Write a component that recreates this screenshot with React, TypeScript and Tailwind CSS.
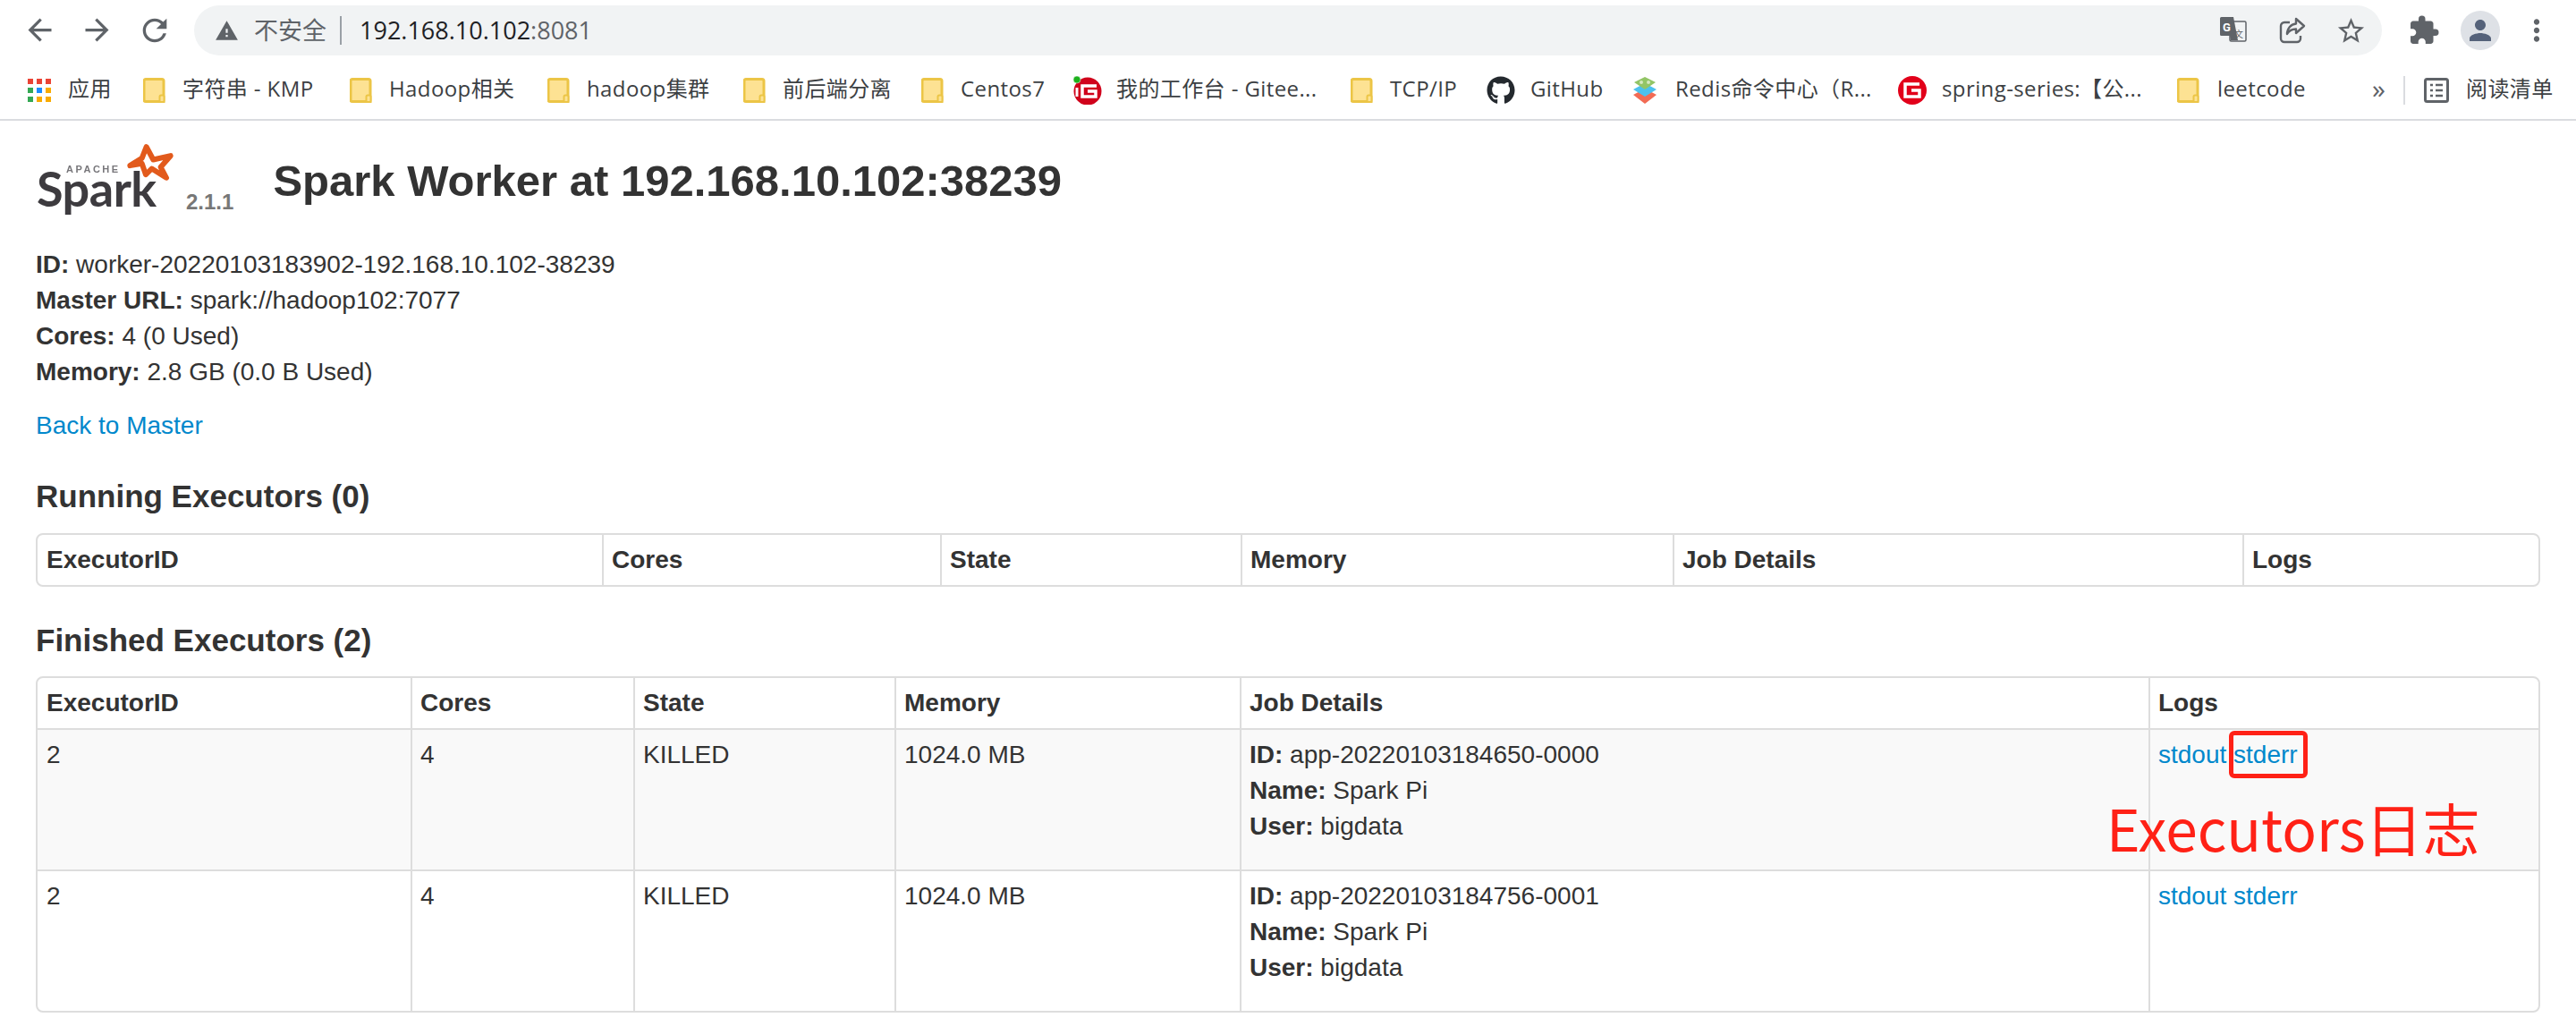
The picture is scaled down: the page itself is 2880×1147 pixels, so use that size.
import React from 'react';
import { FaGithub } from 'react-icons/fa';
import {
  MdArrowBack,
  MdArrowForward,
  MdExtension,
  MdMoreVert,
  MdPerson,
  MdRefresh,
  MdStarBorder,
  MdWarning,
} from 'react-icons/md';

const chromeFont = "font-['Open_Sans','Noto_Sans_CJK_SC',sans-serif]";

const Folder = () => (
  <svg width="25" height="28" viewBox="0 0 25 28" className="shrink-0">
    <path d="M3 1.5h18a2 2 0 0 1 2 2v23H3a2 2 0 0 1-2-2v-21a2 2 0 0 1 2-2z" fill="#fde293" stroke="#ecc546" strokeWidth="3" />
    <rect x="18.5" y="19.5" width="5" height="7.5" rx="1.5" fill="#fde293" stroke="#ecc546" strokeWidth="2" />
  </svg>
);

const AppsGrid = () => {
  const colors = ['bg-[#ea4335]', 'bg-[#ea4335]', 'bg-[#ea4335]', 'bg-[#34a853]', 'bg-[#1a8cff]', 'bg-[#f9ab00]', 'bg-[#34a853]', 'bg-[#f9ab00]', 'bg-[#f9ab00]'];
  return (
    <div className="grid shrink-0 grid-cols-3 gap-1">
      {colors.map((c, i) => (
        <div key={i} className={`h-[6px] w-[6px] ${c}`} />
      ))}
    </div>
  );
};

const GiteeIcon = () => (
  <svg width="32" height="32" viewBox="0 0 32 32" className="shrink-0">
    <circle cx="16" cy="17" r="15.5" fill="#d0021b" />
    <circle cx="4" cy="4" r="4" fill="#1db11d" stroke="#fff" strokeWidth="0.5" />
    <path d="M4 13v10" stroke="#fff" strokeWidth="3" fill="none" />
    <path d="M26 11H10v12h15v-6h-9" stroke="#fff" strokeWidth="3.5" fill="none" />
  </svg>
);

const SeriesIcon = () => (
  <svg width="32" height="32" viewBox="0 0 32 32" className="shrink-0">
    <circle cx="16" cy="16" r="16" fill="#e2001a" />
    <path d="M24 9H8v14h16v-7H15" stroke="#fff" strokeWidth="3.5" fill="none" />
  </svg>
);

const RedisIcon = () => (
  <svg width="28" height="32" viewBox="0 0 28 32" className="shrink-0 blur-[0.4px]">
    <path d="M1 21l13-7 13 7-13 10z" fill="#f26b54" />
    <path d="M1 15l13-7 13 7-13 8z" fill="#4cc1ee" />
    <path d="M2 7l12-6 12 6-12 8z" fill="#93c566" />
    <circle cx="10" cy="7" r="2" fill="#d5e8c0" />
    <circle cx="18" cy="7" r="2" fill="#d5e8c0" />
  </svg>
);

const TranslateIcon = () => (
  <svg width="30" height="30" viewBox="0 0 30 30" className="shrink-0">
    <rect x="11" y="5" width="18" height="22" rx="1.5" fill="#f1f3f4" stroke="#5f6368" strokeWidth="1.5" />
    <path d="M1.5 0H15l5 26h-8l-1-5H1.5A1.5 1.5 0 0 1 0 19.500V1.500A1.500 1.500 0 0 1 1.500 0z" fill="#5f6368" />
    <text x="3" y="16" fontSize="13" fontWeight="700" fill="#fff" fontFamily="Roboto, sans-serif">G</text>
    <text x="16" y="23" fontSize="10" fill="#5f6368" fontFamily="Noto Sans CJK SC, sans-serif">文</text>
  </svg>
);

const ShareIcon = () => (
  <svg width="30" height="30" viewBox="0 0 30 30" fill="none" stroke="#5f6368" strokeWidth="2.4" strokeLinejoin="round" className="shrink-0">
    <path d="M12 6H6a4 4 0 0 0-4 4v14a4 4 0 0 0 4 4h14a4 4 0 0 0 4-4v-3" />
    <path d="M19 2l9 8-9 8v-4.500c-5 0-8 2-10 5.500 0-6 4-11 10-11.500z" />
  </svg>
);

const ReadingListIcon = () => (
  <svg width="28" height="28" viewBox="0 0 28 28" fill="none" className="shrink-0">
    <rect x="1.500" y="1.500" width="25" height="25" rx="2" stroke="#5f6368" strokeWidth="3" />
    <path d="M7 8h3M13 8h8M7 14h3M13 14h8M7 20h3M13 20h8" stroke="#5f6368" strokeWidth="2.500" />
  </svg>
);

const SparkLogo = () => (
  <div className="relative h-[80px] w-[167px] shrink-0 blur-[0.6px]">
    <svg width="60" height="47" viewBox="350 30 180 140" className="absolute left-[98px] top-0">
      <path
        d="M427 42l23 43 58-13-33 38 19 36-49-31-20 20-13-37-40 7 40-25z"
        fill="none"
        stroke="#e25a1c"
        strokeWidth="18"
        strokeLinejoin="round"
      />
    </svg>
    <span className="absolute left-[34px] top-[24px] font-['Liberation_Sans',sans-serif] text-[11px] font-bold leading-[10px] tracking-[2.500px] text-[#77767a]">
      APACHE
    </span>
    <span className="absolute left-[1px] top-[36px] font-['Lato',sans-serif] text-[54px] font-bold leading-[30px] tracking-[-0.5px] text-[#3d3b3f]">
      Spark
    </span>
  </div>
);

const Bookmark = ({ icon, label, className }: { icon: React.ReactNode; label?: string; className: string }) => (
  <div className={`flex shrink-0 items-center gap-[19px] whitespace-nowrap ${className}`}>
    {icon}
    {label && <span className="-mt-[3px]">{label}</span>}
  </div>
);

const Toolbar = () => (
  <div className={`${chromeFont} h-[135px] border-b-2 border-[#dadce0] bg-white text-[#3c4043]`}>
    <div className="flex h-[68px] items-center pl-[25px] pr-[22px]">
      <MdArrowBack size={39} color="#5f6368" className="-mt-[1px] shrink-0" />
      <MdArrowForward size={39} color="#5f6368" className="-mt-[1px] ml-[25px] shrink-0" />
      <MdRefresh size={40} color="#5f6368" className="-mt-[1px] ml-[25px] shrink-0" />
      <div className="ml-[24px] mt-[6px] flex h-[56px] w-[2446px] shrink-0 items-center justify-between self-start rounded-full bg-[#f1f3f4] pl-[23px] pr-[20px]">
        <div className="flex items-center">
          <MdWarning size={27} color="#5f6368" />
          <span className="ml-[17px] text-[27px] text-[#5f6368]">不安全</span>
          <div className="ml-[15px] h-[32px] w-[2px] bg-[#9aa0a6]" />
          <span className="ml-[20px] text-[27px] text-[#202124]">
            192.168.10.102<span className="text-[#5f6368]">:8081</span>
          </span>
        </div>
        <div className="flex items-center gap-[36px]">
          <TranslateIcon />
          <ShareIcon />
          <MdStarBorder size={35} color="#5f6368" className="-mx-[3px]" />
        </div>
      </div>
      <MdExtension size={36} color="#5f6368" className="ml-[29px] shrink-0" />
      <div className="ml-[23px] flex h-[44px] w-[44px] shrink-0 items-center justify-center rounded-full bg-[#dee1e6]">
        <MdPerson size={36} color="#55627a" />
      </div>
      <MdMoreVert size={38} color="#5f6368" className="ml-[22px] shrink-0" />
    </div>
    <div className="flex h-[65px] items-center pl-[31px] text-[24px] tracking-[0.4px]">
      <Bookmark icon={<AppsGrid />} label="应用" className="w-[129px]" />
      <Bookmark icon={<Folder />} label="字符串 - KMP" className="w-[231px]" />
      <Bookmark icon={<Folder />} label="Hadoop相关" className="w-[221px]" />
      <Bookmark icon={<Folder />} label="hadoop集群" className="w-[219px]" />
      <Bookmark icon={<Folder />} label="前后端分离" className="w-[199px]" />
      <Bookmark icon={<Folder />} label="Centos7" className="w-[170px]" />
      <Bookmark icon={<GiteeIcon />} label="我的工作台 - Gitee..." className="w-[310px] !gap-[16px]" />
      <Bookmark icon={<Folder />} label="TCP/IP" className="w-[152px]" />
      <Bookmark icon={<FaGithub size={32} color="#24292e" />} label="GitHub" className="w-[163px] !gap-[17px]" />
      <Bookmark icon={<RedisIcon />} label="Redis命令中心（R..." className="w-[297px] !gap-[20px]" />
      <Bookmark icon={<SeriesIcon />} label="spring-series:【公..." className="w-[312px] !gap-[17px]" />
      <Bookmark icon={<Folder />} label="leetcode" className="w-[218px] !gap-[20px]" />
      <span className="-mt-[4px] w-[35px] shrink-0 text-[30px] leading-none text-[#5f6368]">»</span>
      <div className="h-[32px] w-[2px] shrink-0 bg-[#dadce0]" />
      <Bookmark icon={<ReadingListIcon />} label="阅读清单" className="ml-[21px] !gap-[19px]" />
    </div>
  </div>
);

const headers = ['ExecutorID', 'Cores', 'State', 'Memory', 'Job Details', 'Logs'];

const Cell = ({ first, top, children, className = '' }: { first?: boolean; top?: boolean; children?: React.ReactNode; className?: string }) => (
  <td className={`border-[#ddd] pt-2 pr-2.5 align-top ${first ? 'pl-2.5' : 'border-l-2 pl-[9px]'} ${top ? 'border-t-2' : ''} ${className}`}>{children}</td>
);

const ExecutorTable = ({ widths, rows }: { widths: number[]; rows?: React.ReactNode }) => (
  <div className="rounded-lg border-2 border-[#ddd]">
    <table className="w-full table-fixed border-separate border-spacing-0">
      <colgroup>
        {widths.map((w, i) => (
          <col key={i} style={{ width: w }} />
        ))}
      </colgroup>
      <thead>
        <tr>
          {headers.map((h, i) => (
            <th key={h} className={`border-[#ddd] py-2 pr-2.5 text-left font-bold ${i ? 'border-l-2 pl-[9px]' : 'pl-2.5'}`}>
              {h}
            </th>
          ))}
        </tr>
      </thead>
      <tbody>{rows}</tbody>
    </table>
  </div>
);

const Row = ({ appId, striped, marked }: { appId: string; striped?: boolean; marked?: boolean }) => {
  const bg = striped ? 'bg-[#f9f9f9] pb-7' : 'pb-7';
  return (
    <tr>
      <Cell first top className={bg}>2</Cell>
      <Cell top className={bg}>4</Cell>
      <Cell top className={bg}>KILLED</Cell>
      <Cell top className={bg}>1024.0 MB</Cell>
      <Cell top className={bg}>
        <div><strong>ID:</strong> {appId}</div>
        <div><strong>Name:</strong> Spark Pi</div>
        <div><strong>User:</strong> bigdata</div>
      </Cell>
      <Cell top className={`relative ${bg}`}>
        <a className="text-[#0088cc]">stdout</a>{' '}
        <span className="relative">
          <a className="text-[#0088cc]">stderr</a>
          {marked && (
            <span className="absolute -left-[5px] -top-[11px] h-[53px] w-[88px] rounded-[6px] border-[5px] border-[#ff2116]" />
          )}
        </span>
        {marked && (
          <span className="absolute -left-[49px] top-[63px] whitespace-nowrap font-['Noto_Sans_CJK_SC',sans-serif] text-[64px] leading-[90px] text-[#ff2116]">
            Executors日志
          </span>
        )}
      </Cell>
    </tr>
  );
};

export default function App() {
  return (
    <div className="min-h-[1147px] bg-white">
      <Toolbar />
      <div className="px-10 pt-[25px] font-['Liberation_Sans',Arial,sans-serif] text-[28px] leading-[40px] text-[#333]">
        <div className="flex h-[116px] items-start">
          <SparkLogo />
          <span className="ml-[1px] mt-[51px] text-[24px] font-bold leading-[30px] text-[#777]">2.1.1</span>
          <h3 className="ml-[44px] mt-[12px] text-[49px] font-bold leading-[60px]">Spark Worker at 192.168.10.102:38239</h3>
        </div>
        <div><strong>ID:</strong> worker-20220103183902-192.168.10.102-38239</div>
        <div><strong>Master URL:</strong> spark://hadoop102:7077</div>
        <div><strong>Cores:</strong> 4 (0 Used)</div>
        <div><strong>Memory:</strong> 2.8 GB (0.0 B Used)</div>
        <a className="mt-5 block text-[#0088cc]">Back to Master</a>
        <h4 className="mb-[21px] mt-[39px] text-[35px] font-bold">Running Executors (0)</h4>
        <ExecutorTable widths={[631, 378, 336, 483, 637, 331]} />
        <h4 className="mb-5 mt-10 text-[35px] font-bold">Finished Executors (2)</h4>
        <ExecutorTable
          widths={[417, 249, 292, 386, 1016, 436]}
          rows={
            <>
              <Row appId="app-20220103184650-0000" striped marked />
              <Row appId="app-20220103184756-0001" />
            </>
          }
        />
      </div>
    </div>
  );
}
